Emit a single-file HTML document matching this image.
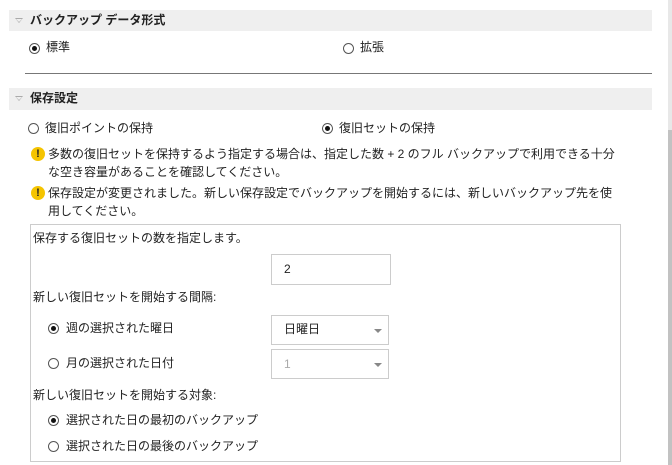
<!DOCTYPE html>
<html><head><meta charset="utf-8"><style>
html,body{margin:0;width:672px;height:465px;overflow:hidden}
body{background:#fff;font-family:"Liberation Sans","Noto Sans CJK JP",sans-serif;font-size:12px;color:#222;position:relative}
.a{position:absolute;white-space:nowrap;line-height:16px}
.hdr{position:absolute;left:9px;width:643px;height:21px;background:#efefef}
.hdr b{position:absolute;left:21px;top:2px;font-size:12px;line-height:16px}
.tri{position:absolute;left:6px;top:8px;width:0;height:0;border-left:4px solid transparent;border-right:4px solid transparent;border-top:5px solid #aaa}
.tri:after{content:"";position:absolute;left:-3px;top:-4px;border-left:3px solid transparent;border-right:3px solid transparent;border-top:3px solid #efefef}
.r{position:absolute;width:11px;height:11px;border:1px solid #555;border-radius:50%;box-sizing:border-box;background:#fff}
.r.on:after{content:"";position:absolute;left:2px;top:2px;width:5px;height:5px;border-radius:50%;background:#111}
.w{position:absolute;width:14px;height:14px;border-radius:50%;background:#f5c400;color:#222;font-weight:bold;font-size:11px;text-align:center;line-height:14px}
.box{position:absolute;border:1px solid #ccc;box-sizing:border-box;background:#fff}
.dd{position:absolute;right:6px;top:13px;border-left:4px solid transparent;border-right:4px solid transparent;border-top:4px solid #888}
</style></head><body>
<div class="hdr" style="top:10px"><div class="tri"></div><b>バックアップ データ形式</b></div>
<div class="r on" style="left:29px;top:43px"></div><div class="a" style="left:46px;top:39px">標準</div>
<div class="r" style="left:343px;top:43px"></div><div class="a" style="left:360px;top:39px">拡張</div>
<div style="position:absolute;left:25px;top:73px;width:627px;height:1px;background:#777"></div>
<div class="hdr" style="top:88px;height:22px"><div class="tri"></div><b>保存設定</b></div>
<div class="r" style="left:28px;top:123px"></div><div class="a" style="left:45px;top:120px">復旧ポイントの保持</div>
<div class="r on" style="left:322px;top:123px"></div><div class="a" style="left:339px;top:120px">復旧セットの保持</div>
<div class="w" style="left:31px;top:147px">!</div>
<div class="a" style="left:48px;top:146px">多数の復旧セットを保持するよう指定する場合は、指定した数 + 2 のフル バックアップで利用できる十分</div>
<div class="a" style="left:48px;top:164px">な空き容量があることを確認してください。</div>
<div class="w" style="left:31px;top:186px">!</div>
<div class="a" style="left:48px;top:185px">保存設定が変更されました。新しい保存設定でバックアップを開始するには、新しいバックアップ先を使</div>
<div class="a" style="left:48px;top:203px">用してください。</div>
<div class="box" style="left:30px;top:224px;width:591px;height:238px"></div>
<div class="a" style="left:33px;top:230px">保存する復旧セットの数を指定します。</div>
<div class="box" style="left:271px;top:254px;width:120px;height:31px"></div><div class="a" style="left:284px;top:261px">2</div>
<div class="a" style="left:33px;top:289px">新しい復旧セットを開始する間隔:</div>
<div class="r on" style="left:48px;top:323px"></div><div class="a" style="left:66px;top:320px">週の選択された曜日</div>
<div class="box" style="left:271px;top:315px;width:118px;height:30px"><div class="dd"></div></div><div class="a" style="left:284px;top:321px">日曜日</div>
<div class="r" style="left:48px;top:358px"></div><div class="a" style="left:66px;top:355px">月の選択された日付</div>
<div class="box" style="left:271px;top:349px;width:118px;height:30px"><div class="dd"></div></div><div class="a" style="left:284px;top:356px;color:#aaa">1</div>
<div class="a" style="left:33px;top:387px">新しい復旧セットを開始する対象:</div>
<div class="r on" style="left:48px;top:415px"></div><div class="a" style="left:66px;top:412px">選択された日の最初のバックアップ</div>
<div class="r" style="left:48px;top:441px"></div><div class="a" style="left:66px;top:438px">選択された日の最後のバックアップ</div>
<div style="position:absolute;left:668px;top:0;width:4px;height:130px;background:#e8e8e8"></div>
<div style="position:absolute;left:668px;top:130px;width:4px;height:335px;background:#c2c2c2"></div>
</body></html>
